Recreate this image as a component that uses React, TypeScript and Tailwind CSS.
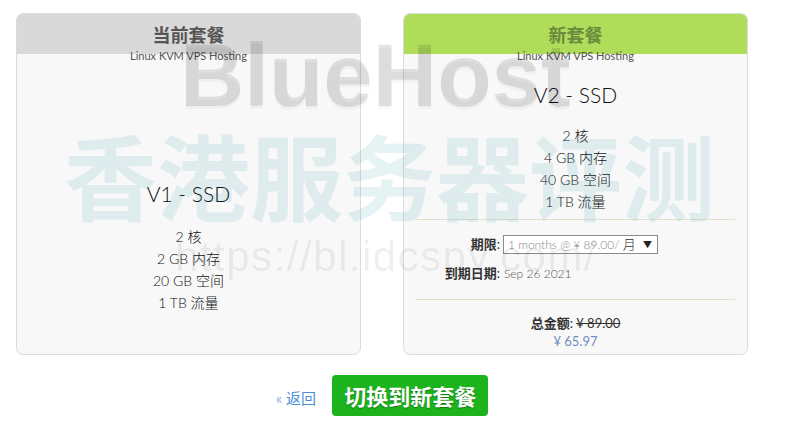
import React from "react";

const body = "font-['Lato','Noto_Sans_CJK_SC',sans-serif]";

function Specs({ items }: { items: string[] }) {
  return (
    <div className="flex flex-col items-center text-[14px] leading-[22px] font-light text-[#111]">
      {items.map((t) => (
        <div key={t}>{t}</div>
      ))}
    </div>
  );
}

function CardHeader({ title, tone }: { title: string; tone: "gray" | "green" }) {
  return (
    <>
      <div
        className={
          tone === "gray"
            ? "h-[40px] rounded-t-[6px] bg-[#d9d9d9] flex items-center justify-center text-[18px] font-bold text-[#555] font-['Noto_Sans_CJK_SC',sans-serif]"
            : "h-[40px] rounded-t-[6px] bg-[#afdc59] flex items-center justify-center text-[18px] font-bold text-[#6a8a3e] font-['Noto_Sans_CJK_SC',sans-serif]"
        }
      >
        {title}
      </div>
      <div className="-mt-[5px] text-center text-[11px] leading-[14px] text-[#555]">
        Linux KVM VPS Hosting
      </div>
    </>
  );
}

export default function App() {
  return (
    <div className={`relative w-[785px] h-[432px] bg-white overflow-hidden ${body}`}>
      <div className="pl-[16px] pt-[13px] w-[748px]">
        <div className="flex gap-[42px]">
          {/* current plan */}
          <div className="w-[345px] h-[342px] rounded-[7px] border border-[#dcdcdc] bg-[#f8f8f8] flex flex-col">
            <CardHeader title="当前套餐" tone="gray" />
            <div className="mt-[117px] text-center text-[21px] leading-[28px] font-light text-[#111]">V1 - SSD</div>
            <div className="mt-[18px]">
              <Specs items={["2 核", "2 GB 内存", "20 GB 空间", "1 TB 流量"]} />
            </div>
          </div>

          {/* new plan */}
          <div className="w-[345px] h-[342px] rounded-[7px] border border-[#dcdcdc] bg-[#f8f8f8] flex flex-col">
            <CardHeader title="新套餐" tone="green" />
            <div className="mt-[18px] text-center text-[21px] leading-[28px] font-light text-[#111]">V2 - SSD</div>
            <div className="mt-[16px]">
              <Specs items={["2 核", "4 GB 内存", "40 GB 空间", "1 TB 流量"]} />
            </div>
            <div className="mx-[12px] mt-[6px] h-px bg-[#dfe1cf]" />
            <div className="mt-[15px] flex items-center">
              <div className="w-[96px] text-right text-[13px] text-[#333]">
                <span className="font-bold">期限</span>:
              </div>
              <div className="ml-[3px] w-[155px] h-[19px] border border-[#8a8a8a] bg-white flex items-center pl-[4px] pr-[5px] text-[12px] font-light text-[#888]">
                <span className="flex-1 whitespace-nowrap">
                  1 months @ ¥ 89.00/ <span className="text-[13px] text-[#333]">月</span>
                </span>
                <span className="text-[9px] text-[#222]">▼</span>
              </div>
            </div>
            <div className="mt-[11px] flex items-center h-[16px]">
              <div className="w-[96px] text-right text-[13px] text-[#333]">
                <span className="font-bold">到期日期</span>:
              </div>
              <div className="ml-[4px] text-[12px] font-light text-[#555]">Sep 26 2021</div>
            </div>
            <div className="mx-[12px] mt-[17px] h-px bg-[#dfe1cf]" />
            <div className="mt-[14px] text-center text-[13px] leading-[18px] text-[#333]">
              <span className="font-bold">总金额</span>: <span className="line-through">¥ 89.00</span>
            </div>
            <div className="text-center text-[13px] leading-[18px] text-[#6f8fc2]">¥ 65.97</div>
          </div>
        </div>

        <div className="mt-[20px] flex items-center justify-center gap-[16px]">
          <a className="mt-[6px] text-[15px] text-[#4a8fd6] no-underline cursor-pointer">
            <span className="text-[#8fb0dc]">«</span> 返回
          </a>
          <button className="h-[41px] px-[12px] rounded-[4px] bg-[#1cb31c] text-white text-[22px] font-bold font-['Noto_Sans_CJK_SC',sans-serif] [text-shadow:0_1px_1px_rgba(0,0,0,0.35)]">
            切换到新套餐
          </button>
        </div>
      </div>

      {/* watermark overlay */}
      <div className="pointer-events-none absolute inset-0">
        <div className="absolute left-[180px] top-[31px] text-[89px] leading-none font-bold font-['Liberation_Sans',sans-serif] text-[rgba(0,0,0,0.1)] [text-shadow:0_3px_0_rgba(0,0,0,0.03)] whitespace-nowrap">
          BlueHost
        </div>
        <div className="absolute left-[64px] top-[127px] text-[93px] leading-none font-bold font-['Noto_Sans_CJK_SC',sans-serif] text-[rgba(0,140,160,0.1)] whitespace-nowrap">
          香港服务器评测
        </div>
        <div className="absolute left-[175px] top-[236px] text-[42px] leading-none font-['Liberation_Sans',sans-serif] tracking-[1.5px] text-[rgba(0,0,0,0.07)] whitespace-nowrap">
          https://bl.idcspy.com/
        </div>
      </div>
    </div>
  );
}
